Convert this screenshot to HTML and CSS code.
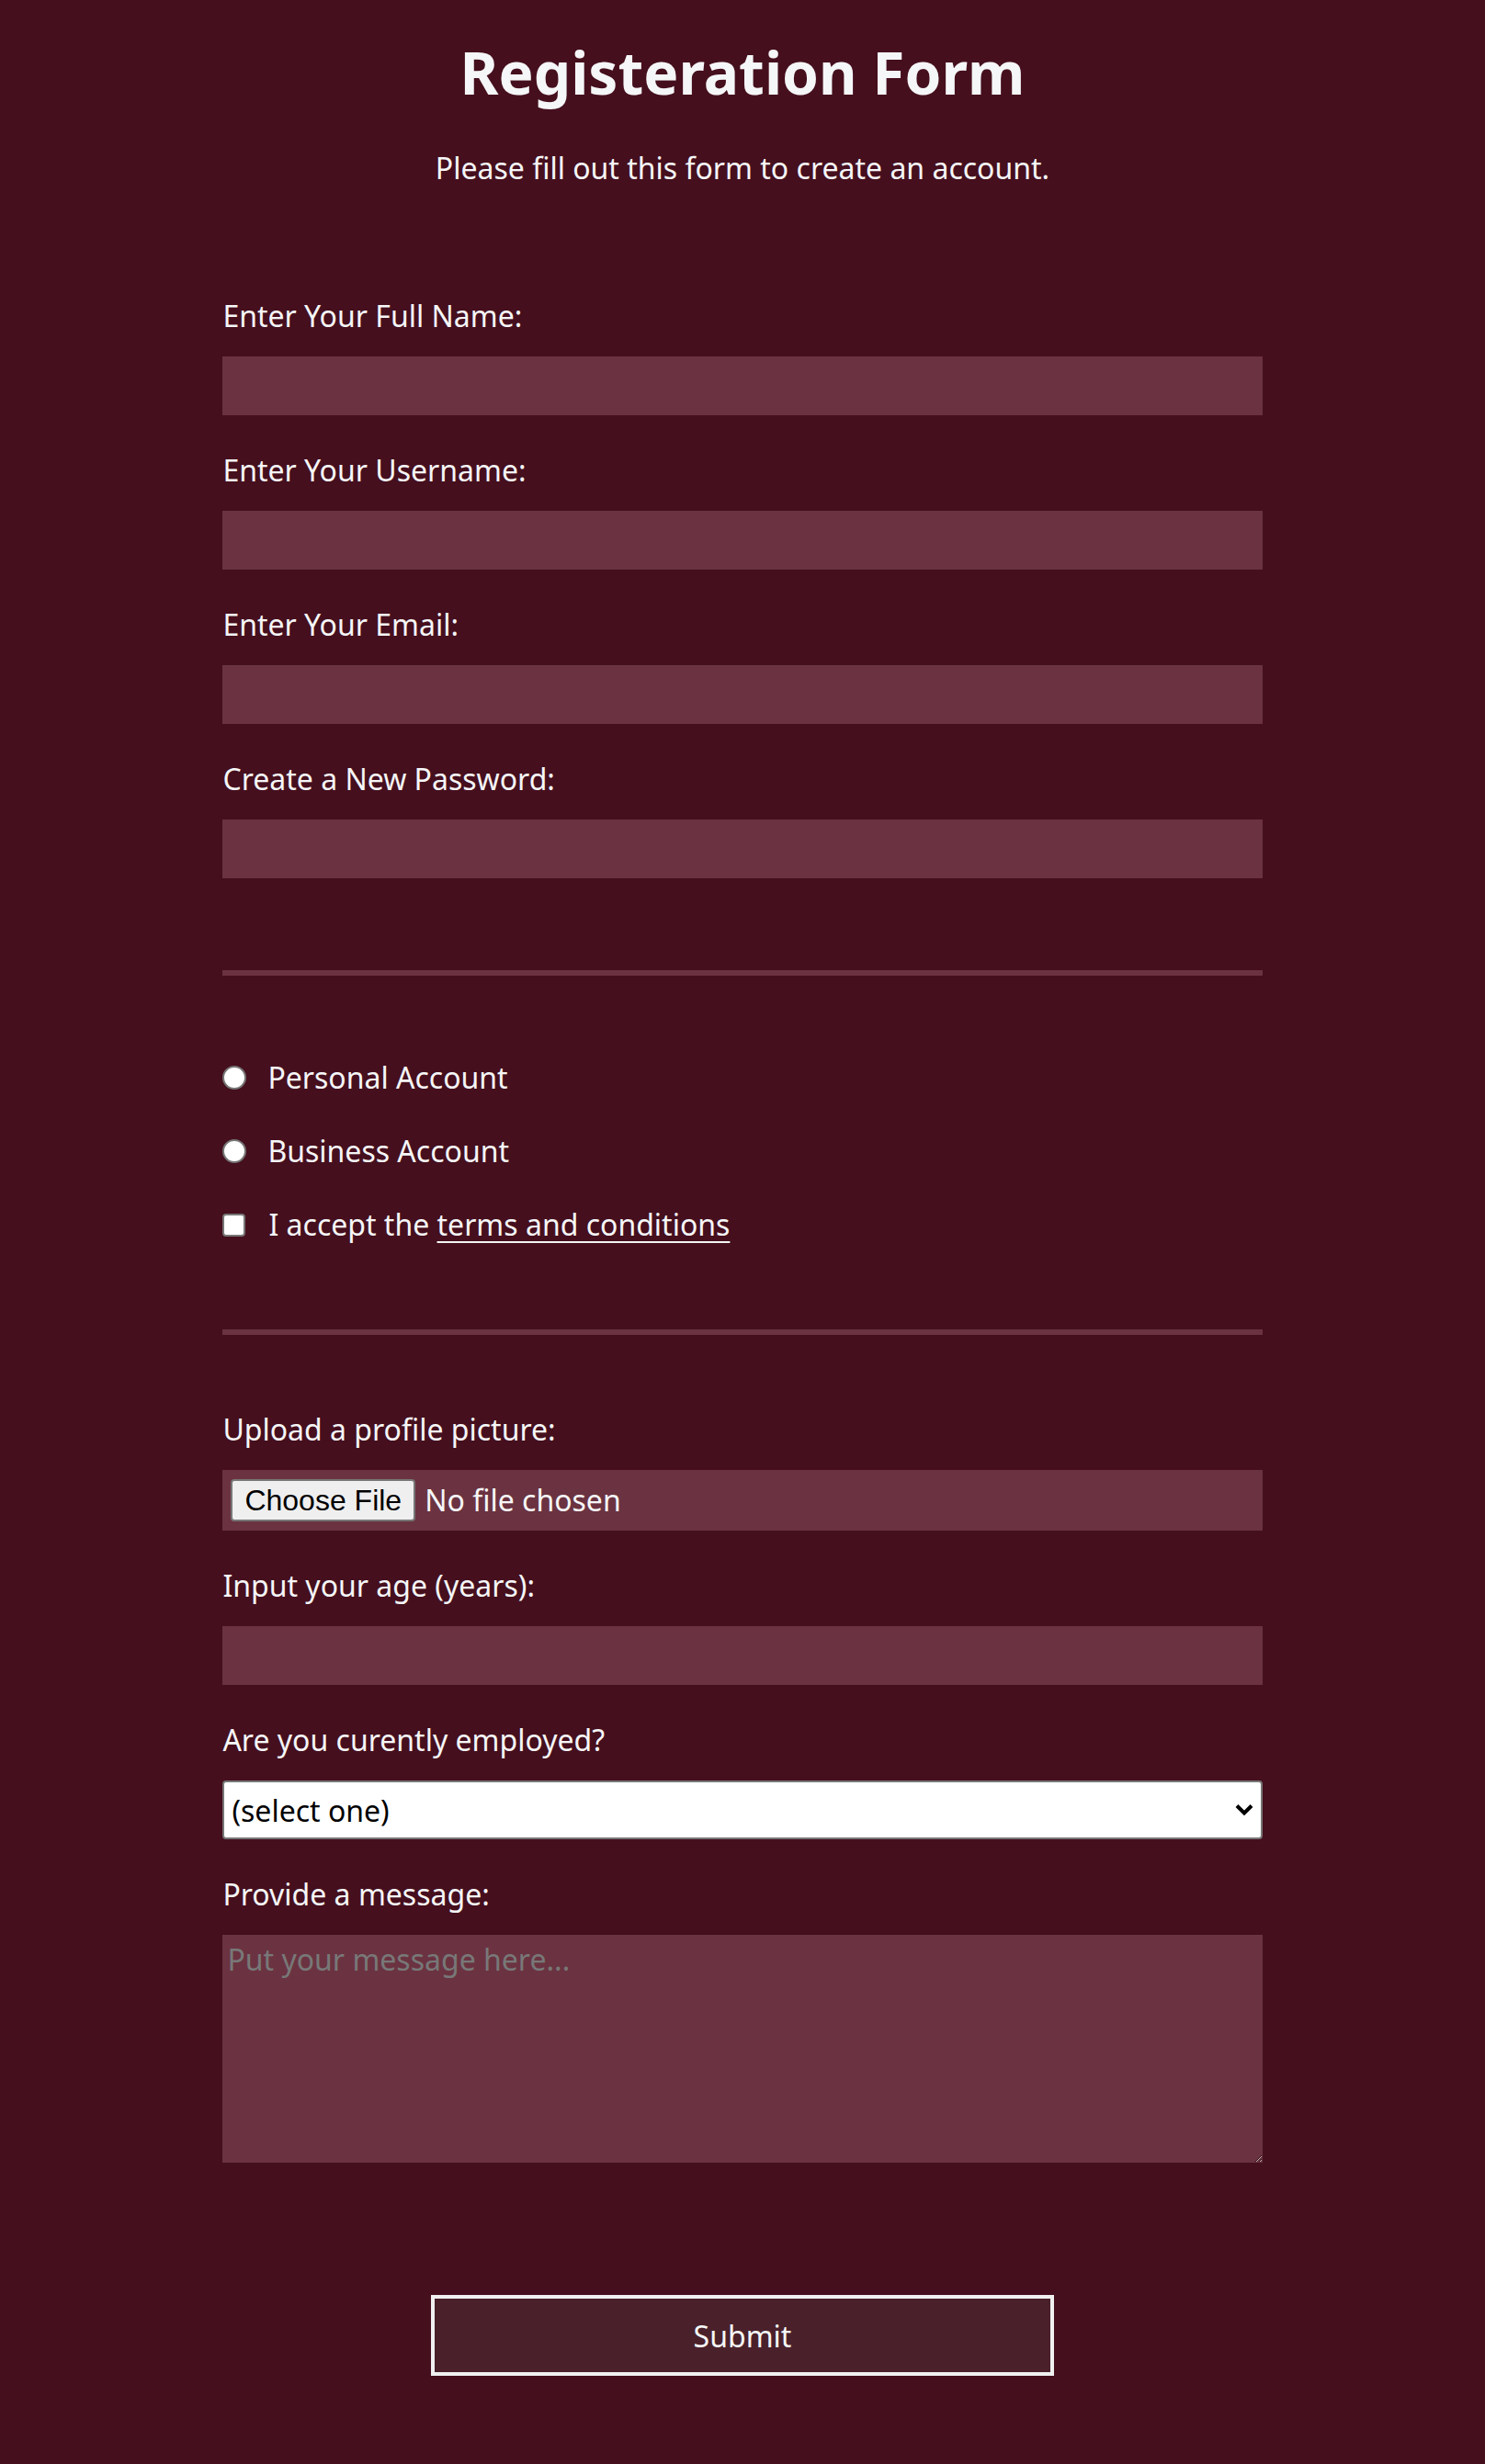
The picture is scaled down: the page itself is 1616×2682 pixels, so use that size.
FILE: index.html
```html
<!DOCTYPE html>
<html lang="en">
<head>
<meta charset="utf-8">
<title>Registeration Form</title>
<link rel="stylesheet" href="styles.css">
</head>
<body>
<div class="page">
  <h1 class="title">Registeration Form</h1>
  <p class="subtitle">Please fill out this form to create an account.</p>
  <form class="form" action="#">
    <fieldset class="section section-info">
      <label class="field"><span class="field-label">Enter Your Full Name:</span><input class="text-input" type="text"></label>
      <label class="field"><span class="field-label">Enter Your Username:</span><input class="text-input" type="text"></label>
      <label class="field"><span class="field-label">Enter Your Email:</span><input class="text-input" type="email"></label>
      <label class="field"><span class="field-label">Create a New Password:</span><input class="text-input" type="password"></label>
    </fieldset>
    <fieldset class="section section-options">
      <label class="option"><input class="radio" type="radio" name="account"><span>Personal Account</span></label>
      <label class="option"><input class="radio" type="radio" name="account"><span>Business Account</span></label>
      <label class="option"><input class="checkbox" type="checkbox"><span>I accept the <a class="terms" href="#">terms and conditions</a></span></label>
    </fieldset>
    <fieldset class="section section-extra">
      <label class="field"><span class="field-label">Upload a profile picture:</span><input class="file-input" type="file"></label>
      <label class="field"><span class="field-label">Input your age (years):</span><input class="text-input" type="number"></label>
      <label class="field"><span class="field-label">Are you curently employed?</span>
        <span class="select-wrap">
          <select class="select">
            <option>(select one)</option>
            <option>Yes</option>
            <option>No</option>
          </select>
          <svg class="select-arrow" width="20" height="14" viewBox="0 0 20 14"><path d="M2 2.5 L10 10.5 L18 2.5" fill="none" stroke="#000" stroke-width="4"/></svg>
        </span>
      </label>
      <label class="field"><span class="field-label">Provide a message:</span><textarea class="textarea" placeholder="Put your message here..."></textarea></label>
    </fieldset>
    <input class="submit" type="submit" value="Submit">
  </form>
</div>
</body>
</html>
```
FILE: styles.css
```css
html, body {
  margin: 0;
  padding: 0;
}

body {
  background-color: #450f1e;
  color: #f5f6f7;
  font-family: "Noto Sans", "Open Sans", sans-serif;
  font-size: 32px;
}

.page {
  padding-top: 35px;
  padding-bottom: 96px;
}

.title {
  margin: 0;
  font-size: 64px;
  font-weight: 700;
  line-height: 88px;
  text-align: center;
}

.subtitle {
  margin: 38px 0 37px;
  font-size: 32px;
  line-height: 44px;
  text-align: center;
}

.form {
  width: 70%;
  margin: 0 auto;
}

.section {
  margin: 0;
  padding: 0;
  border: none;
  min-width: 0;
}

.section-info {
  padding-top: 80px;
  padding-bottom: 100px;
  border-bottom: 6px solid #6b3341;
}

.section-options {
  padding-top: 79px;
  padding-bottom: 82px;
  border-bottom: 6px solid #6b3341;
  display: flex;
  flex-direction: column;
  gap: 16px;
}

.section-extra {
  padding-top: 81px;
}

.field {
  display: flex;
  flex-direction: column;
  gap: 22px;
  margin-bottom: 38px;
}

.field:last-child {
  margin-bottom: 0;
}

.field-label {
  display: block;
  line-height: 44px;
}

.text-input {
  box-sizing: border-box;
  display: block;
  width: 100%;
  height: 64px;
  margin: 0;
  padding: 0 8px;
  border: none;
  background-color: #6b3341;
  color: #ffffff;
  font-family: inherit;
  font-size: 32px;
  outline: none;
}

.option {
  display: flex;
  align-items: center;
  height: 64px;
  line-height: 44px;
}

.radio,
.checkbox {
  appearance: none;
  -webkit-appearance: none;
  box-sizing: border-box;
  width: 26px;
  height: 26px;
  margin: 0 23px 0 0;
  background: #ffffff;
  border: 2px solid #767676;
  flex: none;
}

.radio {
  border-radius: 50%;
}

.checkbox {
  width: 25px;
  height: 25px;
  margin-right: 25px;
  border-radius: 4px;
}

.terms {
  color: #f5f6f7;
  text-decoration: underline;
  text-decoration-thickness: 2px;
  text-underline-offset: 6px;
}

.file-input {
  box-sizing: border-box;
  display: block;
  width: 100%;
  height: 66px;
  margin: 0;
  padding: 10px 9px;
  border: none;
  background-color: #6b3341;
  color: #f5f6f7;
  font-family: inherit;
  font-size: 32px;
  line-height: 46px;
}

.file-input::file-selector-button {
  box-sizing: border-box;
  height: 46px;
  margin: 0 10px 0 0;
  padding: 2px 13px;
  font-family: "Liberation Sans", Arial, sans-serif;
  font-size: 32px;
  color: #000000;
  background: #efefef;
  border: 2px solid #767676;
  border-radius: 4px;
  vertical-align: top;
}

.select-wrap {
  position: relative;
  display: block;
}

.select {
  appearance: none;
  -webkit-appearance: none;
  box-sizing: border-box;
  display: block;
  width: 100%;
  height: 64px;
  margin: 0;
  padding: 0 8px;
  background: #ffffff;
  border: 2px solid #767676;
  border-radius: 4px;
  color: #000000;
  font-family: inherit;
  font-size: 32px;
}

.select-arrow {
  position: absolute;
  right: 10px;
  top: 25px;
  pointer-events: none;
}

.textarea {
  box-sizing: border-box;
  display: block;
  width: 100%;
  height: 248px;
  margin: 0;
  padding: 5px 5px;
  border: none;
  background-color: #6b3341;
  color: #ffffff;
  font-family: inherit;
  font-size: 32px;
  line-height: 44px;
}

.textarea::placeholder {
  color: #787878;
}

.submit {
  box-sizing: border-box;
  display: block;
  width: 60%;
  height: 88px;
  margin: 144px auto 0;
  background-color: #4a212b;
  border: 4px solid #f0f0f0;
  border-radius: 0;
  color: #f5f6f7;
  font-family: inherit;
  font-size: 32px;
}
```
